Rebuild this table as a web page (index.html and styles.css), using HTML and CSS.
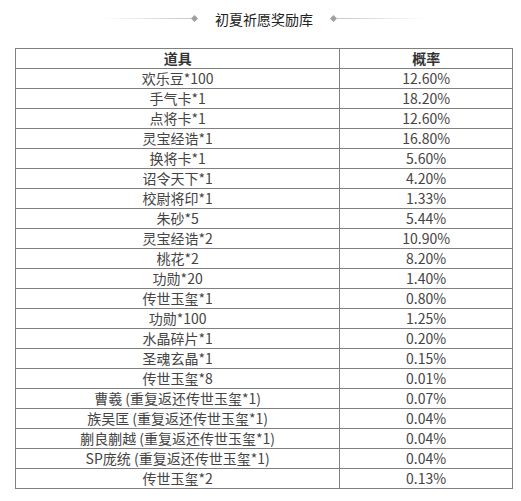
FILE: index.html
```html
<!DOCTYPE html>
<html lang="zh-CN">
<head>
<meta charset="utf-8">
<link rel="stylesheet" href="styles.css">
</head>
<body>
<div class="wrap">
  <div class="title">
    <span class="line line-left"></span>
    <span class="dot"></span>
    <span class="title-text">初夏祈愿奖励库</span>
    <span class="dot"></span>
    <span class="line line-right"></span>
  </div>
  <table class="prob">
    <thead>
      <tr><th class="c1">道具</th><th class="c2">概率</th></tr>
    </thead>
    <tbody>
      <tr><td>欢乐豆*100</td><td>12.60%</td></tr>
      <tr><td>手气卡*1</td><td>18.20%</td></tr>
      <tr><td>点将卡*1</td><td>12.60%</td></tr>
      <tr><td>灵宝经诰*1</td><td>16.80%</td></tr>
      <tr><td>换将卡*1</td><td>5.60%</td></tr>
      <tr><td>诏令天下*1</td><td>4.20%</td></tr>
      <tr><td>校尉将印*1</td><td>1.33%</td></tr>
      <tr><td>朱砂*5</td><td>5.44%</td></tr>
      <tr><td>灵宝经诰*2</td><td>10.90%</td></tr>
      <tr><td>桃花*2</td><td>8.20%</td></tr>
      <tr><td>功勋*20</td><td>1.40%</td></tr>
      <tr><td>传世玉玺*1</td><td>0.80%</td></tr>
      <tr><td>功勋*100</td><td>1.25%</td></tr>
      <tr><td>水晶碎片*1</td><td>0.20%</td></tr>
      <tr><td>圣魂玄晶*1</td><td>0.15%</td></tr>
      <tr><td>传世玉玺*8</td><td>0.01%</td></tr>
      <tr><td>曹羲 (重复返还传世玉玺*1)</td><td>0.07%</td></tr>
      <tr><td>族吴匡 (重复返还传世玉玺*1)</td><td>0.04%</td></tr>
      <tr><td>蒯良蒯越 (重复返还传世玉玺*1)</td><td>0.04%</td></tr>
      <tr><td>SP庞统 (重复返还传世玉玺*1)</td><td>0.04%</td></tr>
      <tr><td>传世玉玺*2</td><td>0.13%</td></tr>
    </tbody>
  </table>
</div>
</body>
</html>
```
FILE: styles.css
```css
html, body {
  margin: 0;
  padding: 0;
  background: #fff;
}
body {
  font-family: "Noto Sans CJK SC", "Noto Sans", sans-serif;
  color: #444;
}
.wrap {
  margin-left: 15px;
  width: 498px;
}
.title {
  height: 37px;
  display: flex;
  align-items: center;
  justify-content: center;
  margin-bottom: 11px;
}
.line {
  width: 88px;
  height: 1px;
}
.line-left {
  background: linear-gradient(to right, rgba(200,200,200,0), #c8c8c8);
}
.line-right {
  background: linear-gradient(to left, rgba(200,200,200,0), #c8c8c8);
}
.dot {
  width: 5px;
  height: 5px;
  background: #a0a0a0;
  transform: rotate(45deg);
  margin: 0 1px;
}
.title-text {
  font-size: 14px;
  line-height: 20px;
  color: #222;
  margin: 0 17px;
}
.prob {
  border-collapse: collapse;
  width: 498px;
  font-size: 14px;
}
.prob th, .prob td {
  border: 1px solid #808080;
  height: 19px;
  padding: 0;
  line-height: 19px;
  text-align: center;
}
.prob th {
  font-weight: bold;
  color: #333;
}
.c1 { width: 324px; }
.c2 { width: 172px; }
```
